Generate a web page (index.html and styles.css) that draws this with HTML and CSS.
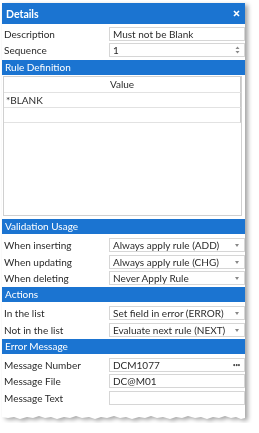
FILE: index.html
```html
<!DOCTYPE html>
<html lang="en">
<head>
<meta charset="UTF-8">
<title>Details</title>
<link rel="stylesheet" href="styles.css">
</head>
<body>
<div class="sheet">
  <div class="panel">
    <div class="titlebar">
      <span>Details</span>
      <svg class="close" width="7" height="7" viewBox="0 0 7 7"><path d="M1 1L6 6M6 1L1 6" stroke="#fff" stroke-width="1.6"/></svg>
    </div>

    <div class="fields first">
      <div class="row"><label>Description</label><div class="box">Must not be Blank</div></div>
      <div class="row"><label>Sequence</label><div class="box">1
        <svg class="spin" width="5" height="8" viewBox="0 0 5 8"><path d="M2.5 0.5L4.5 3H0.5Z M2.5 7.5L4.5 5H0.5Z" fill="#8a8a8a"/></svg></div></div>
    </div>

    <div class="bar">Rule Definition</div>
    <div class="grid">
      <div class="grid-head">Value</div>
      <div class="grid-row">*BLANK</div>
      <div class="grid-row"></div>
    </div>

    <div class="bar">Validation Usage</div>
    <div class="fields">
      <div class="row"><label>When inserting</label><div class="box drop">Always apply rule (ADD)</div></div>
      <div class="row"><label>When updating</label><div class="box drop">Always apply rule (CHG)</div></div>
      <div class="row"><label>When deleting</label><div class="box drop">Never Apply Rule</div></div>
    </div>

    <div class="bar">Actions</div>
    <div class="fields">
      <div class="row"><label>In the list</label><div class="box drop">Set field in error (ERROR)</div></div>
      <div class="row"><label>Not in the list</label><div class="box drop">Evaluate next rule (NEXT)</div></div>
    </div>

    <div class="bar">Error Message</div>
    <div class="fields">
      <div class="row"><label>Message Number</label><div class="box more">DCM1077</div></div>
      <div class="row"><label>Message File</label><div class="box">DC@M01</div></div>
      <div class="row"><label>Message Text</label><div class="box"></div></div>
    </div>
  </div>
  <svg class="torn" width="243" height="14" viewBox="0 0 243 14">
    <path d="M0 0H243V9L239 10L234 8L229 9L223 7L217 9L211 8L205 10L199 8L193 9L186 7L180 9L174 8L168 10L161 8L155 9L149 7L143 9L137 8L130 10L124 8L118 9L112 7L105 9L99 8L93 10L87 8L80 9L74 7L68 9L62 8L55 10L49 8L43 9L37 7L31 9L25 8L18 10L12 8L6 9L0 8Z" fill="#fff"/>
  </svg>
</div>
</body>
</html>
```

FILE: styles.css
```css
body {
    margin: 0;
    background: #ffffff;
    font-family: Lato, "Noto Sans", sans-serif;
    font-size: 10px;
    color: #2b2b2b;
}
.sheet {
    width: 243px;
    margin: 3px 0 0 2px;
    filter: drop-shadow(3px 2px 2px rgba(0, 0, 0, 0.35));
}
.panel {
    background: #ffffff;
    padding-bottom: 3px;
}
.torn {
    display: block;
    margin-top: -1px;
}
.titlebar {
    height: 21px;
    background: #1b74d1;
    color: #ffffff;
    font-weight: bold;
    font-size: 10.5px;
    display: flex;
    align-items: center;
    justify-content: space-between;
    padding: 0 5px 0 4px;
}
.bar {
    height: 15px;
    line-height: 15px;
    background: #1b74d1;
    color: #ffffff;
    padding-left: 3px;
}
.fields {
    display: flex;
    flex-direction: column;
    gap: 2.5px;
    padding: 4px 0 2px;
}
.fields.first {
    gap: 2px;
    padding: 3px 0;
}
.row {
    display: flex;
    align-items: center;
    height: 14px;
}
.row label {
    width: 105px;
    padding-left: 2px;
}
.box {
    position: relative;
    width: 131px;
    height: 12px;
    line-height: 12px;
    border: 1px solid #d6d6d6;
    padding-left: 3px;
    white-space: nowrap;
}
.spin {
    position: absolute;
    right: 4px;
    top: 2px;
}
.drop::after {
    content: "";
    position: absolute;
    right: 5px;
    top: 5px;
    border-left: 2.5px solid transparent;
    border-right: 2.5px solid transparent;
    border-top: 3px solid #888888;
}
.more::after {
    content: "\2022\2022\2022";
    position: absolute;
    right: 4px;
    top: 0;
    font-size: 5px;
    letter-spacing: -0.5px;
    color: #444444;
}
.grid {
    height: 138px;
    margin: 1px 3px 3px 1px;
    border: 1px solid #d0d0d0;
}
.grid-head {
    height: 15px;
    line-height: 15px;
    text-align: center;
    border-bottom: 1px solid #e2e2e2;
    border-right: 1px solid #c8c8c8;
}
.grid-row {
    height: 14px;
    line-height: 14px;
    padding-left: 2px;
    border-bottom: 1px solid #e2e2e2;
    border-right: 1px solid #c8c8c8;
}
```
